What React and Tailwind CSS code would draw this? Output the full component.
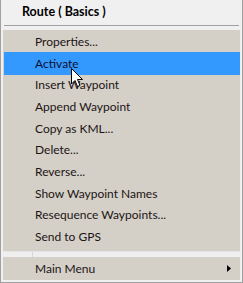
import React from 'react';

const items = [
  'Properties...',
  'Activate',
  'Insert Waypoint',
  'Append Waypoint',
  'Copy as KML...',
  'Delete...',
  'Reverse...',
  'Show Waypoint Names',
  'Resequence Waypoints...',
  'Send to GPS',
];

const MenuItem = ({ label, active, arrow }) => (
  <div className="relative shrink-0 flex items-center h-[21.7px] pl-[32px] pr-[9px] text-[#1c1414]">
    {active && <div className="absolute left-[1px] right-0 top-[-0.7px] bottom-[-0.7px] bg-[#3399ff]" />}
    <span className={`relative flex-1 ${active ? 'text-[#101030]' : ''}`}>{label}</span>
    {arrow && (
      <svg className="relative" width="4" height="7" viewBox="0 0 4 7">
        <path d="M0 0 L4 3.5 L0 7 Z" fill="#000" />
      </svg>
    )}
  </div>
);

const Cursor = () => (
  <svg
    className="absolute left-[70px] top-[68px]"
    width="13"
    height="20"
    viewBox="0 0 13 20"
  >
    <path
      d="M0.5 0.5 L0.5 16 L4 12.5 L6.5 18.5 L9 17.5 L6.5 11.5 L11.5 11.5 Z"
      fill="#fff"
      stroke="#000"
      strokeWidth="1"
    />
  </svg>
);

export default function App() {
  return (
    <div
      className="relative w-[243px] h-[283px] bg-[#f0f0f0] border-x border-b border-[#a0a0a0] flex flex-col text-[12px]"
      style={{ fontFamily: 'Lato, "Liberation Sans", Arial, sans-serif' }}
    >
      <div className="shrink-0 h-[25px] flex items-center pl-[21px] font-bold text-[12.5px] text-black">
        Route ( Basics )
      </div>
      <div className="shrink-0 mx-[3px] h-px bg-[#a0a0a0]" />
      <div className="flex-1 mx-[2px] mt-[4px] mb-[3px] bg-[#d4d0c8] flex flex-col pt-[1px]">
        {items.map((it) => (
          <MenuItem key={it} label={it} active={it === 'Activate'} />
        ))}
        <div className="shrink-0 mt-[3px] h-[6px] flex flex-col">
          <div className="h-px bg-[#e4e4e4]" />
          <div className="flex-1 bg-[#efefef] flex">
            <div className="w-[29px]" />
            <div className="w-px bg-[#d6d6d6]" />
          </div>
        </div>
        <div className="shrink-0 mt-[1px]">
          <MenuItem label="Main Menu" arrow />
        </div>
      </div>
      <Cursor />
    </div>
  );
}
